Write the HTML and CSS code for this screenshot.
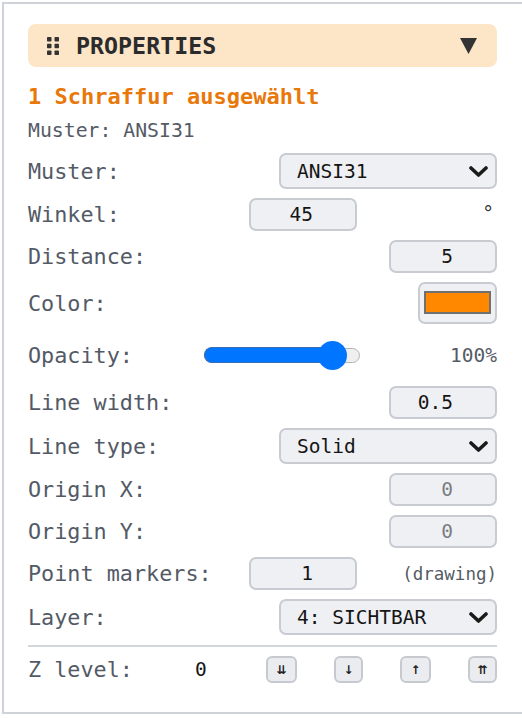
FILE: index.html
```html
<!DOCTYPE html>
<html lang="de">
<head>
<meta charset="utf-8">
<title>Properties</title>
<link rel="stylesheet" href="styles.css">
</head>
<body>
<div class="panel">
  <div class="panel-head">
    <svg class="grip" width="12" height="18" viewBox="0 0 12 18" aria-hidden="true">
      <rect x="0" y="0" width="4.5" height="4.5" rx="0.8"/>
      <rect x="7.5" y="0" width="4.5" height="4.5" rx="0.8"/>
      <rect x="0" y="6.8" width="4.5" height="4.5" rx="0.8"/>
      <rect x="7.5" y="6.8" width="4.5" height="4.5" rx="0.8"/>
      <rect x="0" y="13.5" width="4.5" height="4.5" rx="0.8"/>
      <rect x="7.5" y="13.5" width="4.5" height="4.5" rx="0.8"/>
    </svg>
    <span class="head-title">PROPERTIES</span>
    <svg class="caret" width="17" height="16" viewBox="0 0 17 16" aria-hidden="true">
      <polygon points="0,0 17,0 8.5,16"/>
    </svg>
  </div>

  <div class="selection">1 Schraffur ausgewählt</div>
  <div class="subtitle">Muster: ANSI31</div>

  <div class="rows">
    <div class="row">
      <span class="label">Muster:</span>
      <div class="select"><span>ANSI31</span>
        <svg class="chev" width="19" height="11" viewBox="0 0 19 11"><polyline points="2,2 9.5,9 17,2"/></svg>
      </div>
    </div>

    <div class="row">
      <span class="label">Winkel:</span>
      <input class="num" type="text" value="45">
      <span class="unit deg">°</span>
    </div>

    <div class="row">
      <span class="label">Distance:</span>
      <input class="num" type="text" value="5">
    </div>

    <div class="row">
      <span class="label">Color:</span>
      <div class="color-btn"><span class="swatch"></span></div>
    </div>

    <div class="row row-tall">
      <span class="label">Opacity:</span>
      <div class="slider">
        <div class="slider-fill"></div>
        <div class="slider-thumb"></div>
      </div>
      <span class="unit unit-pct">100%</span>
    </div>

    <div class="row">
      <span class="label">Line width:</span>
      <input class="num" type="text" value="0.5">
    </div>

    <div class="row">
      <span class="label">Line type:</span>
      <div class="select"><span>Solid</span>
        <svg class="chev" width="19" height="11" viewBox="0 0 19 11"><polyline points="2,2 9.5,9 17,2"/></svg>
      </div>
    </div>

    <div class="row">
      <span class="label">Origin X:</span>
      <input class="num" type="text" value="0" disabled>
    </div>

    <div class="row">
      <span class="label">Origin Y:</span>
      <input class="num" type="text" value="0" disabled>
    </div>

    <div class="row">
      <span class="label">Point markers:</span>
      <input class="num" type="text" value="1">
      <span class="unit unit-note">(drawing)</span>
    </div>

    <div class="row">
      <span class="label">Layer:</span>
      <div class="select"><span>4: SICHTBAR</span>
        <svg class="chev" width="19" height="11" viewBox="0 0 19 11"><polyline points="2,2 9.5,9 17,2"/></svg>
      </div>
    </div>
  </div>

  <hr class="divider">

  <div class="zrow">
    <span class="label zlabel">Z level:</span>
    <span class="zvalue">0</span>
    <div class="zbtns">
      <button class="zbtn" type="button">⇊</button>
      <button class="zbtn zbtn-narrow" type="button">↓</button>
      <button class="zbtn" type="button">↑</button>
      <button class="zbtn zbtn-narrow" type="button">⇈</button>
    </div>
  </div>
</div>
</body>
</html>
```

FILE: styles.css
```css
* {
  box-sizing: border-box;
}

html, body {
  margin: 0;
  padding: 0;
  background: #ffffff;
  overflow: hidden;
}

body {
  font-family: "DejaVu Sans Mono", "Liberation Mono", monospace;
  color: #222;
}

.panel {
  margin: 2px 0 0 2px;
  width: 523px;
  height: 712px;
  border: 2px solid #cfd2d8;
  padding: 20px 24px 0 24px;
  background: #fff;
}

/* collapsible header bar */
.panel-head {
  display: flex;
  align-items: center;
  height: 43px;
  width: 469px;
  padding: 0 20px 0 19px;
  background: #fde6c7;
  border-radius: 8px;
}

.grip {
  fill: #333;
  flex: none;
}

.head-title {
  margin-left: 17px;
  font-weight: bold;
  font-size: 23.3px;
  color: #2b2b2b;
}

.caret {
  margin-left: auto;
  fill: #333;
}

.selection {
  margin-top: 17px;
  font-size: 22px;
  font-weight: bold;
  color: #e8780a;
  line-height: 26px;
}

.subtitle {
  margin-top: 9px;
  font-size: 19.8px;
  color: #555b66;
  line-height: 23px;
}

.rows {
  margin-top: 11px;
  width: 469px;
  display: flex;
  flex-direction: column;
  gap: 9px;
}

.row {
  display: flex;
  align-items: center;
  min-height: 33px;
}

.row-tall {
  min-height: 44px;
}

.label {
  flex: 1;
  font-size: 21.8px;
  color: #535a66;
  white-space: nowrap;
}

.select {
  width: 218px;
  height: 36px;
  display: flex;
  align-items: center;
  justify-content: space-between;
  padding: 0 7px 0 16px;
  background: #eff0f4;
  border: 2px solid #c8ccd2;
  border-radius: 7px;
  font-size: 19.5px;
  color: #151515;
}

.chev {
  fill: none;
  stroke: #1a1a1a;
  stroke-width: 3.6;
  stroke-linecap: round;
  stroke-linejoin: round;
}

.num {
  width: 108px;
  height: 33px;
  margin: 0;
  padding: 0 42px 0 4px;
  text-align: right;
  font-family: inherit;
  font-size: 19.5px;
  color: #151515;
  background: #eff0f4;
  border: 2px solid #c8ccd2;
  border-radius: 7px;
  outline: none;
}

.num:disabled {
  color: #7a7d82;
  background: #eff0f4;
}

.unit {
  width: 140px;
  text-align: right;
  font-size: 19.5px;
  color: #555b66;
}

.unit.deg {
  padding-right: 3px;
  margin-top: -2px;
  color: #333;
}

.unit-pct {
  width: 137px;
}

.unit-note {
  font-size: 17.5px;
}

.color-btn {
  width: 79px;
  height: 42px;
  padding: 7px 4px 8px 4px;
  background: #eff0f4;
  border: 2px solid #c8ccd2;
  border-radius: 7px;
  display: flex;
}

.swatch {
  flex: 1;
  background: #ff8800;
  border: 2px solid #707070;
}

/* range slider */
.slider {
  position: relative;
  width: 156px;
  height: 15px;
  background: #efefef;
  border: 1.5px solid #b5b5b5;
  border-radius: 8px;
}

.slider-fill {
  position: absolute;
  left: -1.5px;
  top: -1.5px;
  bottom: -1.5px;
  width: 130px;
  background: #0075ff;
  border: 1.5px solid #3a6eb5;
  border-right: none;
  border-radius: 8px 0 0 8px;
}

.slider-thumb {
  position: absolute;
  left: 113px;
  top: 50%;
  width: 29px;
  height: 29px;
  margin-top: -14.5px;
  border-radius: 50%;
  background: #0075ff;
}

.divider {
  margin: 10px 0 0 0;
  width: 469px;
  height: 2px;
  border: none;
  background: #d3d6db;
}

.zrow {
  display: flex;
  align-items: center;
  width: 469px;
  margin-top: 8px;
  height: 29px;
}

.zlabel {
  flex: none;
  width: 167px;
}

.zvalue {
  font-size: 19.5px;
  color: #151515;
}

.zbtns {
  margin-left: auto;
  width: 231px;
  display: flex;
  justify-content: space-between;
  align-items: center;
}

.zbtn {
  width: 31px;
  height: 27px;
  padding: 0;
  background: #eaecef;
  border: 2px solid #c6cad0;
  border-radius: 6px;
  font-family: "DejaVu Sans", sans-serif;
  font-size: 12px;
  font-weight: bold;
  color: #222;
  line-height: 1;
}

.zbtn-narrow {
  width: 29px;
}
```
